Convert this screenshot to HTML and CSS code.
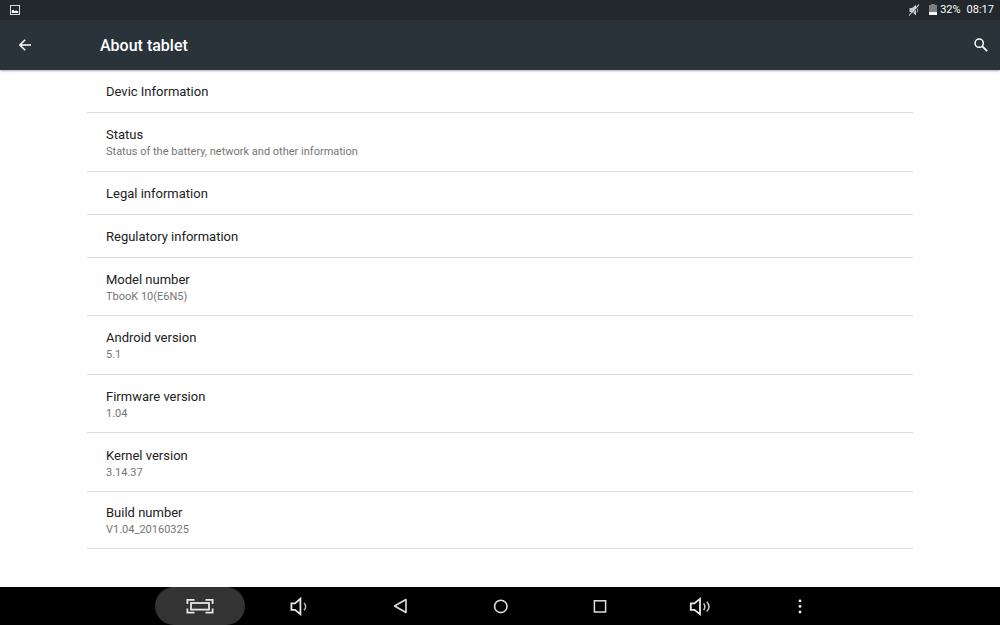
FILE: index.html
```html
<!DOCTYPE html>
<html lang="en">
<head>
<meta charset="utf-8">
<meta name="viewport" content="width=device-width, initial-scale=1">
<title>About tablet</title>
<link rel="stylesheet" href="styles.css">
</head>
<body>
<div class="status-bar">
  <svg class="status-picture" viewBox="0 0 10 10" aria-hidden="true"><rect x=".5" y=".5" width="9" height="9" fill="none" stroke="#d8dadb"/><path d="M1.8 8V5.6L3.4 4.8L4.8 6.3L6 5.6L8.2 6.6V8Z" fill="#fff"/></svg>
  <div class="status-info">
    <svg class="status-mute" viewBox="0 0 12 12" aria-hidden="true"><path d="M1.5 4H4L8 .8V11.4L4 8H1.5Z" fill="#c4c8ca"/><path d="M9 4.2Q10.6 6 9 8.4" fill="none" stroke="#9ba0a2"/><path d="M1.8 12L11.6 1.2" stroke="#22292c" stroke-width=".8"/><path d="M1 11.5L11 .6" stroke="#d5d8d9" stroke-width="1.1"/></svg>
    <svg class="status-battery" viewBox="0 0 8 11" aria-hidden="true"><path d="M2 0H6V1H8V8H0V1H2Z" fill="#7b8082"/><rect y="8" width="8" height="3" fill="#fff"/></svg>
    <span class="status-percent">32%</span>
    <time>08:17</time>
  </div>
</div>
<header class="app-bar">
  <button class="icon-button" type="button" aria-label="Back"><svg class="back-icon" viewBox="0 0 12 12" aria-hidden="true"><path d="M12 6H1M6.2 .7L.9 6L6.2 11.3" fill="none" stroke="#fff" stroke-width="1.5"/></svg></button>
  <h1 class="app-title">About tablet</h1>
  <button class="icon-button search-button" type="button" aria-label="Search"><svg class="search-icon" viewBox="0 0 14 14" aria-hidden="true"><circle cx="5.2" cy="5.2" r="4.1" fill="none" stroke="#fff" stroke-width="1.5"/><path d="M8.3 8.3L13.2 13.2" stroke="#fff" stroke-width="1.8"/></svg></button>
</header>
<main class="content">
  <ul class="settings">
    <li class="row first"><span class="name">Devic Information</span></li>
    <li class="row detailed"><span class="name">Status</span><span class="summary">Status of the battery, network and other information</span></li>
    <li class="row"><span class="name">Legal information</span></li>
    <li class="row"><span class="name">Regulatory information</span></li>
    <li class="row detailed"><span class="name">Model number</span><span class="summary">TbooK 10(E6N5)</span></li>
    <li class="row detailed"><span class="name">Android version</span><span class="summary">5.1</span></li>
    <li class="row detailed"><span class="name">Firmware version</span><span class="summary">1.04</span></li>
    <li class="row detailed"><span class="name">Kernel version</span><span class="summary">3.14.37</span></li>
    <li class="row last"><span class="name">Build number</span><span class="summary">V1.04_20160325</span></li>
  </ul>
</main>
<nav class="nav-bar" aria-label="System">
  <button class="nav-button pressed" type="button" aria-label="Screenshot"><svg width="28" height="16" viewBox="0 0 28 16" aria-hidden="true"><g fill="none" stroke="#e6e6e6" stroke-width="1.8"><rect x="5" y="5" width="18" height="6.6"/><path d="M1.4 6V1.9H8.5M19.5 1.9H26.6V6M1.4 10.6V14.7H8.5M19.5 14.7H26.6V10.6"/></g></svg></button>
  <button class="nav-button" type="button" aria-label="Volume down"><svg width="20" height="20" viewBox="0 0 20 20" aria-hidden="true"><path d="M1.4 7.4H5L10.4 2.8V18.2L5 13.8H1.4Z" fill="none" stroke="#e6e6e6" stroke-width="1.8"/><path d="M14 7Q17.2 10.6 14 14.2" fill="none" stroke="#bbb" stroke-width="1.4"/></svg></button>
  <button class="nav-button" type="button" aria-label="Back"><svg width="14" height="16" viewBox="0 0 14 16" aria-hidden="true"><path d="M1.6 8L13 1.5V14.5Z" fill="none" stroke="#dedede" stroke-width="1.6" stroke-linejoin="round"/></svg></button>
  <button class="nav-button" type="button" aria-label="Home"><svg width="16" height="16" viewBox="0 0 16 16" aria-hidden="true"><circle cx="8.8" cy="8.4" r="6.2" fill="none" stroke="#dedede" stroke-width="1.6"/></svg></button>
  <button class="nav-button" type="button" aria-label="Recent apps"><svg width="14" height="14" viewBox="0 0 14 14" aria-hidden="true"><rect x="1.4" y="1.8" width="11.2" height="11.2" fill="none" stroke="#dedede" stroke-width="1.5"/></svg></button>
  <button class="nav-button" type="button" aria-label="Volume up"><svg width="22" height="20" viewBox="0 0 22 20" aria-hidden="true"><path d="M1.8 7.4H5.4L11 2.8V18.2L5.4 13.8H1.8Z" fill="none" stroke="#e6e6e6" stroke-width="1.8"/><path d="M14.6 7.6Q17.2 10.6 14.6 14M17.8 5.8Q22.2 10.6 17.8 15.6" fill="none" stroke="#ccc" stroke-width="1.5"/></svg></button>
  <button class="nav-button" type="button" aria-label="More"><svg width="4" height="16" viewBox="0 0 4 16" aria-hidden="true"><g fill="#eee"><circle cx="2" cy="2.8" r="1.4"/><circle cx="2" cy="8.4" r="1.4"/><circle cx="2" cy="14" r="1.4"/></g></svg></button>
</nav>
</body>
</html>
```
FILE: styles.css
```css
* {
  box-sizing: border-box;
}

body {
  display: flex;
  flex-direction: column;
  min-height: 100vh;
  margin: 0;
  background: #fff;
  color: #212121;
  font-family: Roboto, "Liberation Sans", sans-serif;
}

button {
  display: flex;
  align-items: center;
  justify-content: center;
  padding: 0;
  border: 0;
  background: none;
}

.status-bar {
  display: flex;
  align-items: center;
  justify-content: space-between;
  height: 20px;
  padding: 0 6px 0 10px;
  background: #22292c;
}

.status-picture {
  width: 10px;
  height: 10px;
}

.status-info {
  display: flex;
  align-items: center;
  color: #fff;
  font-size: 11px;
  line-height: 20px;
}

.status-mute {
  width: 12px;
  height: 12px;
  margin-right: 9px;
}

.status-battery {
  width: 8px;
  height: 11px;
  margin: 0 3px 1px 0;
}

.status-percent {
  margin-right: 6px;
}

.app-bar {
  display: flex;
  align-items: center;
  height: 50px;
  background: #28333a;
  box-shadow: 0 1px 2px rgba(40, 51, 58, 0.4);
}

.icon-button {
  width: 50px;
  height: 50px;
}

.back-icon {
  width: 12px;
  height: 12px;
}

.app-title {
  flex: 1;
  margin: 0;
  padding-left: 50px;
  color: #fff;
  font-size: 16px;
  font-weight: 500;
}

.search-button {
  width: 38px;
}

.search-icon {
  width: 14px;
  height: 14px;
}

.content {
  display: flex;
  flex: 1;
  padding: 1px 87px 38px;
}

.settings {
  display: flex;
  flex: 1;
  flex-direction: column;
  margin: 0;
  padding: 0;
  list-style: none;
}

.row {
  display: flex;
  flex-direction: column;
  justify-content: center;
  min-height: 43px;
  padding: 2px 19px 0;
  border-bottom: 1px solid #dcdcdc;
}

.first {
  min-height: 42px;
  padding-top: 0;
}

.detailed {
  flex: 1;
  min-height: 50px;
}

.last {
  min-height: 57px;
}

.name {
  font-size: 13px;
  line-height: 18px;
}

.summary {
  color: #757575;
  font-size: 11px;
  line-height: 15px;
}

.nav-bar {
  display: flex;
  justify-content: center;
  height: 38px;
  background: #000;
}

.nav-button {
  width: 10%;
}

.pressed {
  width: 9%;
  margin: 0 5px;
  border-radius: 19px;
  background: #333;
}
```
